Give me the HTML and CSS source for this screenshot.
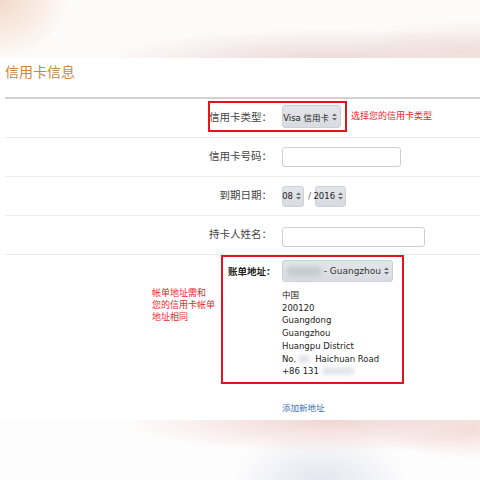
FILE: index.html
```html
<!DOCTYPE html>
<html lang="zh-CN">
<head>
    <meta charset="UTF-8">
    <meta name="viewport" content="width=device-width, initial-scale=1.0">
    <title>信用卡信息</title>
    <link rel="stylesheet" href="styles.css">
</head>
<body>

<div class="fundo-topo"></div>

<div class="painel">
    <h2 class="titulo">信用卡信息</h2>

    <div class="form">
        <div class="linha">
            <div class="rotulo">信用卡类型：</div>
            <div class="select sel-tipo">Visa 信用卡 <svg class="seta" width="5" height="8" viewBox="0 0 5 8"><polygon points="0,3 2.5,0.5 5,3"/><polygon points="0,5 2.5,7.5 5,5"/></svg></div>
            <span class="aviso">选择您的信用卡类型</span>
            <div class="caixa-vermelha caixa-tipo"></div>
        </div>

        <div class="linha">
            <div class="rotulo">信用卡号码：</div>
            <div class="campo campo-numero"></div>
        </div>

        <div class="linha">
            <div class="rotulo">到期日期：</div>
            <div class="select sel-mes">08 <svg class="seta" width="5" height="8" viewBox="0 0 5 8"><polygon points="0,3 2.5,0.5 5,3"/><polygon points="0,5 2.5,7.5 5,5"/></svg></div>
            <span class="barra">/</span>
            <div class="select sel-ano">2016 <svg class="seta" width="5" height="8" viewBox="0 0 5 8"><polygon points="0,3 2.5,0.5 5,3"/><polygon points="0,5 2.5,7.5 5,5"/></svg></div>
        </div>

        <div class="linha">
            <div class="rotulo">持卡人姓名：</div>
            <div class="campo campo-nome"></div>
        </div>

        <div class="linha-endereco">
            <div class="nota">
                <div>帐单地址需和</div>
                <div>您的信用卡帐单</div>
                <div>地址相同</div>
            </div>
            <div class="caixa-endereco">
                <div class="rotulo-endereco">账单地址：</div>
                <div class="conteudo-endereco">
                    <div class="select sel-endereco"><span class="borrado borrado-nome"></span>- Guangzhou <svg class="seta" width="5" height="8" viewBox="0 0 5 8"><polygon points="0,3 2.5,0.5 5,3"/><polygon points="0,5 2.5,7.5 5,5"/></svg></div>
                    <div class="endereco">
                        <div>中国</div>
                        <div>200120</div>
                        <div>Guangdong</div>
                        <div>Guangzhou</div>
                        <div>Huangpu District</div>
                        <div>No.<span class="borrado borrado-num"></span>Haichuan Road</div>
                        <div>+86 131 <span class="borrado borrado-tel"></span></div>
                    </div>
                </div>
            </div>
        </div>

        <div class="linha-link">
            <a class="link" href="#">添加新地址</a>
        </div>
    </div>
</div>

<div class="fundo-base"></div>

</body>
</html>
```

FILE: styles.css
```css
body {
    margin: 0;
    width: 480px;
    height: 480px;
    overflow: hidden;
    background: #ffffff;
    font-family: "DejaVu Sans", "Noto Sans CJK SC", sans-serif;
}

.fundo-topo {
    height: 58px;
    background:
        radial-gradient(ellipse 70px 60px at 0 0, #f3dac8, transparent),
        radial-gradient(ellipse 230px 34px at 330px 62px, #ead7d5, transparent),
        radial-gradient(ellipse 120px 30px at 470px 50px, #f1e2dc, transparent),
        #fdfbfa;
}

.fundo-base {
    height: 60px;
    background:
        radial-gradient(ellipse 210px 34px at 330px 0, #f0d5d2, transparent),
        radial-gradient(ellipse 90px 50px at 320px 62px, #e2e5f0, transparent),
        radial-gradient(ellipse 90px 30px at 470px 10px, #f4dfdb, transparent),
        #fefdfd;
}

.painel {
    height: 362px;
    padding-left: 5px;
    background: #ffffff;
}

.titulo {
    margin: 0;
    height: 39px;
    line-height: 27px;
    font-family: "Noto Sans CJK SC", sans-serif;
    font-size: 14px;
    font-weight: normal;
    color: #c98546;
}

.form {
    border-top: 2px solid #d2d2d2;
}

.linha {
    position: relative;
    display: flex;
    align-items: center;
    height: 38px;
    border-bottom: 1px solid #ececec;
}

.rotulo {
    width: 273px;
    padding-right: 6px;
    box-sizing: border-box;
    text-align: right;
    font-family: "Noto Sans CJK SC", sans-serif;
    font-size: 10.5px;
    color: #444;
    margin-top: -3px;
}

.select {
    display: flex;
    align-items: center;
    justify-content: flex-end;
    gap: 3px;
    box-sizing: border-box;
    padding: 0 3px 0 4px;
    background: linear-gradient(#e3e5ea, #d8dbe1);
    border: 1px solid #cdd0d6;
    border-radius: 3px;
    font-size: 8.5px;
    color: #222;
    white-space: nowrap;
}

.seta {
    fill: #666;
    flex-shrink: 0;
}

.sel-tipo {
    width: 59px;
    height: 23px;
    margin-left: 4px;
    margin-top: -3px;
}

.aviso {
    margin-left: 10px;
    margin-top: -5px;
    font-family: "Noto Sans CJK SC", sans-serif;
    font-size: 9px;
    color: #e5262b;
}

.caixa-vermelha {
    position: absolute;
    border: 2px solid #e2141c;
    box-sizing: border-box;
}

.caixa-tipo {
    left: 203px;
    top: 2px;
    width: 139px;
    height: 31px;
}

.campo {
    height: 20px;
    margin-left: 4px;
    box-sizing: border-box;
    border: 1px solid #cfcfcf;
    border-radius: 3px;
    background: #fff;
}

.campo-numero {
    width: 119px;
}

.campo-nome {
    width: 143px;
    margin-top: 3px;
}

.sel-mes {
    width: 22px;
    height: 21px;
    margin-left: 4px;
    padding: 0 2px;
}

.barra {
    margin: 0 4px;
    font-size: 9px;
    color: #666;
}

.sel-ano {
    width: 31px;
    height: 21px;
    padding: 0 2px;
}

.linha-endereco {
    display: flex;
    padding-left: 147px;
}

.nota {
    width: 69px;
    margin-top: 32px;
    font-family: "Noto Sans CJK SC", sans-serif;
    font-size: 9px;
    line-height: 12px;
    white-space: nowrap;
    color: #e5262b;
}

.caixa-endereco {
    display: flex;
    width: 183px;
    height: 129px;
    box-sizing: border-box;
    border: 2px solid #e2141c;
    padding: 3px 0 0 5px;
}

.rotulo-endereco {
    width: 54px;
    padding-top: 4px;
    font-family: "Noto Sans CJK SC", sans-serif;
    font-size: 9.5px;
    font-weight: bold;
    color: #222;
}

.sel-endereco {
    width: 111px;
    height: 22px;
    font-size: 9px;
    color: #333;
    justify-content: space-between;
}

.borrado {
    display: inline-block;
    background: #cfd2d9;
    filter: blur(2px);
    border-radius: 3px;
}

.borrado-nome {
    width: 46px;
    height: 9px;
    background: #c6cad2;
}

.endereco {
    margin-top: 7px;
    font-size: 8.5px;
    line-height: 12.7px;
    color: #222;
}

.borrado-num {
    width: 12px;
    height: 8px;
    margin: 0 5px -1px 2px;
    background: #dfe2e8;
}

.borrado-tel {
    width: 32px;
    height: 8px;
    margin-bottom: -1px;
    background: #e2e4ea;
}

.linha-link {
    padding: 16px 0 0 277px;
    line-height: 12px;
}

.link {
    font-family: "Noto Sans CJK SC", sans-serif;
    font-size: 8.5px;
    color: #3b6fb6;
    text-decoration: none;
}
```
